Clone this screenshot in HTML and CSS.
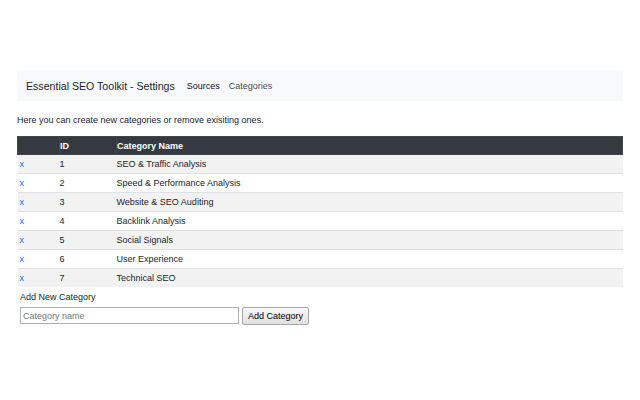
FILE: index.html
```html
<!DOCTYPE html>
<html>
<head>
<meta charset="utf-8">
<link rel="stylesheet" href="styles.css">
</head>
<body>
<div class="page">
  <nav class="navbar">
    <span class="brand">Essential SEO Toolkit - Settings</span>
    <a class="nav-link active">Sources</a>
    <a class="nav-link">Categories</a>
  </nav>
  <p class="intro">Here you can create new categories or remove exisiting ones.</p>
  <table class="cats">
    <colgroup><col class="w-x"><col class="w-id"><col></colgroup>
    <thead>
      <tr><th class="c-x"></th><th>ID</th><th>Category Name</th></tr>
    </thead>
    <tbody>
      <tr><td class="c-x"><a>x</a></td><td>1</td><td>SEO &amp; Traffic Analysis</td></tr>
      <tr><td class="c-x"><a>x</a></td><td>2</td><td>Speed &amp; Performance Analysis</td></tr>
      <tr><td class="c-x"><a>x</a></td><td>3</td><td>Website &amp; SEO Auditing</td></tr>
      <tr><td class="c-x"><a>x</a></td><td>4</td><td>Backlink Analysis</td></tr>
      <tr><td class="c-x"><a>x</a></td><td>5</td><td>Social Signals</td></tr>
      <tr><td class="c-x"><a>x</a></td><td>6</td><td>User Experience</td></tr>
      <tr><td class="c-x"><a>x</a></td><td>7</td><td>Technical SEO</td></tr>
    </tbody>
  </table>
  <div class="add">
    <div class="add-label">Add New Category</div>
    <div class="add-row">
      <input class="add-input" type="text" placeholder="Category name">
      <button class="add-btn">Add Category</button>
    </div>
  </div>
</div>
</body>
</html>
```
FILE: styles.css
```css
html, body { margin: 0; padding: 0; background: #fff; }
body { font-family: "Liberation Sans", Arial, sans-serif; color: #212529; }
.page { padding: 70px 17px 0 17px; }
.navbar {
  height: 31px;
  background: #f8f9fa;
  display: flex;
  align-items: center;
  padding-left: 9px;
}
.brand { font-size: 10.6px; color: #212529; margin-right: 12px; }
.nav-link { font-size: 9px; color: #111; margin-right: 9px; }
.nav-link + .nav-link { color: #4a4f55; }
.intro { font-size: 9px; margin: 13px 0 0 0; line-height: 12px; }
.cats {
  width: 100%;
  table-layout: fixed;
  border-collapse: collapse;
  margin-top: 10px;
  font-size: 9px;
}
.w-x { width: 42px; }
.w-id { width: 57px; }
.cats th {
  background: #343a40;
  color: #fff;
  text-align: left;
  font-weight: bold;
  height: 17px;
  padding: 0;
  border: 1px solid #3f464d;
}
.cats td { height: 18px; padding: 0; border-top: 1px solid #dee2e6; }
.cats tbody tr:nth-child(odd) td { background: #f2f2f2; }
.cats .c-x { padding-left: 2px; }
.cats td.c-x a { color: #0d6efd; }
.add { padding-left: 3px; }
.add-label { font-size: 9px; margin-top: 4px; line-height: 12px; }
.add-row { display: flex; gap: 3px; margin-top: 4px; align-items: flex-start; }
.add-input {
  width: 219px; height: 17px; box-sizing: border-box; margin: 0;
  border: 1px solid #b0b0b0; padding: 0 2px;
  font: 9px "Liberation Sans", Arial, sans-serif;
}
.add-input::placeholder { color: #757575; }
.add-btn {
  height: 18px; box-sizing: border-box; padding: 0 5px; margin: 0;
  font: 9px "Liberation Sans", Arial, sans-serif; color: #000;
  background: linear-gradient(#f8f8f8, #e0e0e0);
  border: 1px solid #a8a8a8; border-radius: 2px;
}
```
